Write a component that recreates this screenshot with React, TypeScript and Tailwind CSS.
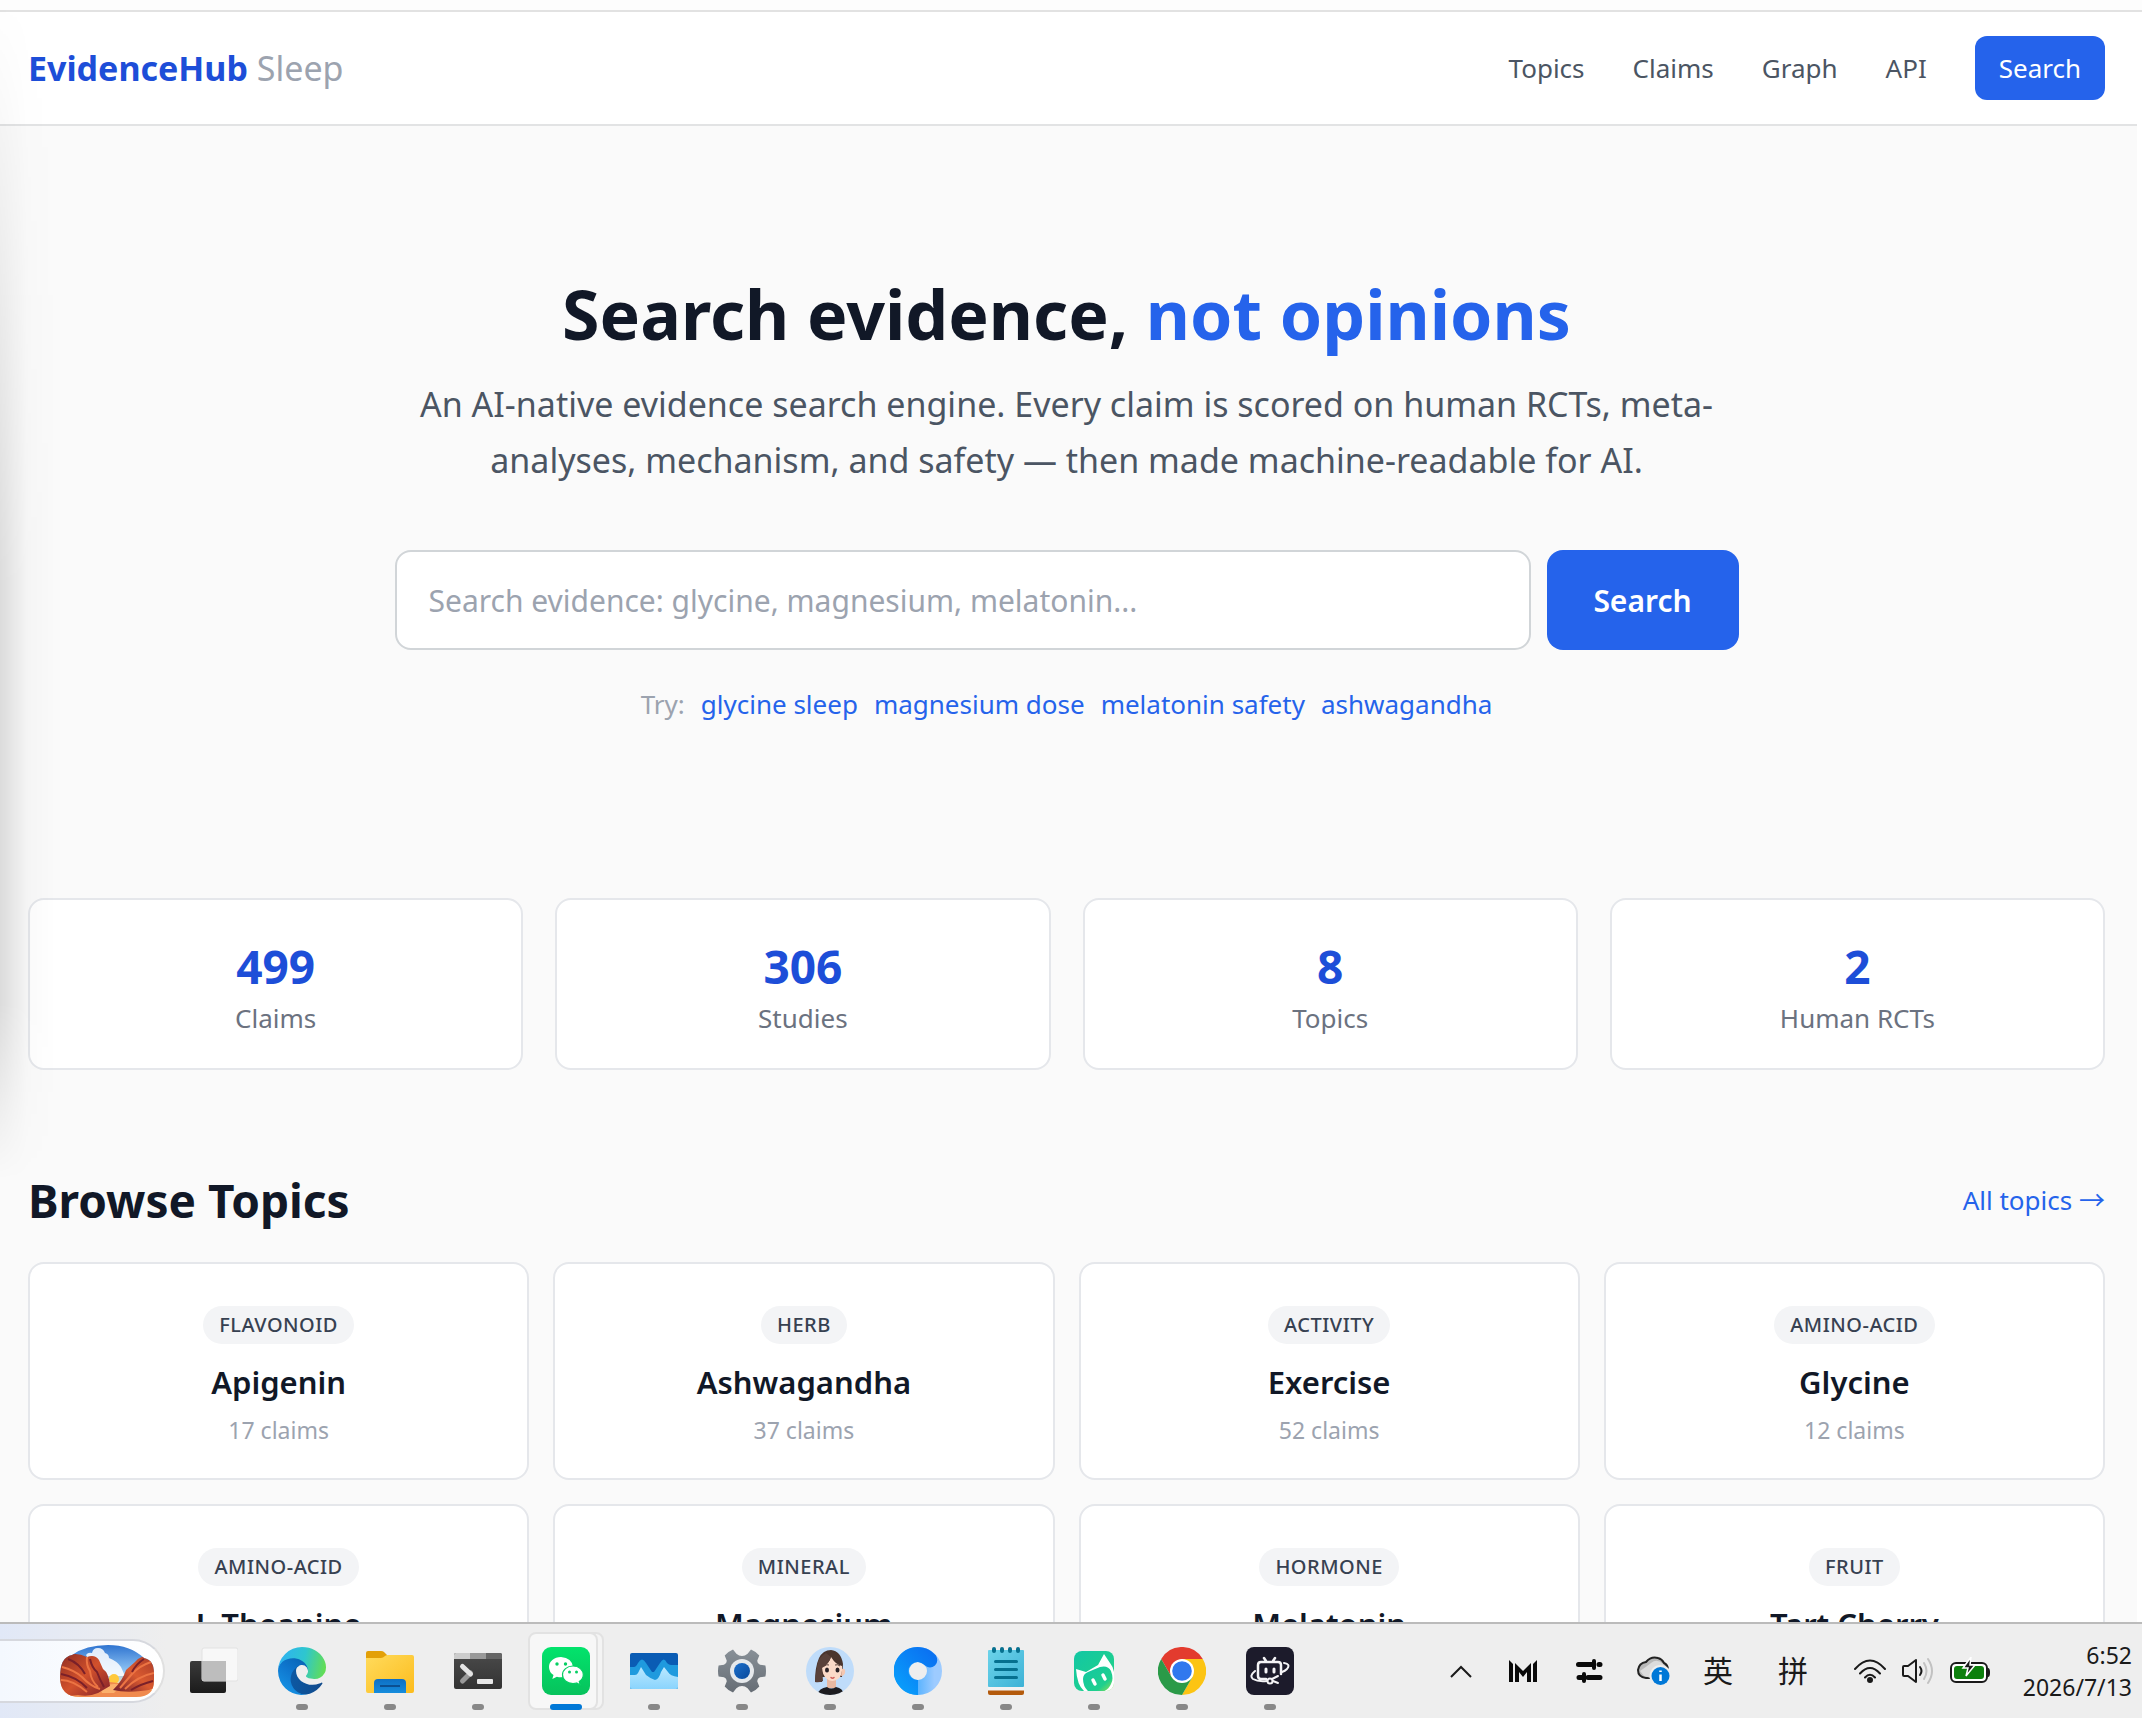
import type { ReactNode } from 'react';

interface Topic {
  category: string;
  name: string;
  claims: number;
}

const navLinks = ['Topics', 'Claims', 'Graph', 'API'];

const suggestions = ['glycine sleep', 'magnesium dose', 'melatonin safety', 'ashwagandha'];

const stats = [
  { value: 499, label: 'Claims' },
  { value: 306, label: 'Studies' },
  { value: 8, label: 'Topics' },
  { value: 2, label: 'Human RCTs' },
];

const topics: Topic[] = [
  { category: 'flavonoid', name: 'Apigenin', claims: 17 },
  { category: 'herb', name: 'Ashwagandha', claims: 37 },
  { category: 'activity', name: 'Exercise', claims: 52 },
  { category: 'amino-acid', name: 'Glycine', claims: 12 },
  { category: 'amino-acid', name: 'L-Theanine', claims: 24 },
  { category: 'mineral', name: 'Magnesium', claims: 86 },
  { category: 'hormone', name: 'Melatonin', claims: 94 },
  { category: 'fruit', name: 'Tart Cherry', claims: 19 },
];

function Navbar() {
  return (
    <header className="flex items-center justify-between border-b-2 border-[#e2e3e4] bg-white py-6 pl-7 pr-8">
      <a href="#" className="text-[34px] leading-[56px] font-bold text-[#1d4ed8]">
        EvidenceHub <span className="font-normal text-[#9ca3af]">Sleep</span>
      </a>
      <nav className="flex items-center gap-12 text-[26px] leading-10 text-[#4b5563]">
        {navLinks.map((link) => (
          <a key={link} href="#">{link}</a>
        ))}
        <a href="#" className="rounded-xl bg-[#2563eb] px-6 py-3 text-white">Search</a>
      </nav>
    </header>
  );
}

function Hero() {
  return (
    <section className="mx-auto flex max-w-[1344px] flex-col pt-[148px] text-center">
      <h1 className="text-[68px] leading-[80px] font-bold text-[#111827]">
        Search evidence, <span className="text-[#2563eb]">not opinions</span>
      </h1>
      <p className="mt-[22px] text-[34px] leading-[56px] text-[#4b5563]">
        An AI-native evidence search engine. Every claim is scored on human RCTs, meta-analyses, mechanism, and safety — then made machine-readable for AI.
      </p>
      <form className="mt-[62px] flex gap-4" onSubmit={(e) => e.preventDefault()}>
        <input
          type="text"
          aria-label="Search evidence"
          placeholder="Search evidence: glycine, magnesium, melatonin..."
          className="h-[100px] min-w-0 flex-1 rounded-2xl border-2 border-[#d1d5d8] bg-white px-8 text-[30px] placeholder:text-[#9ca3af]"
        />
        <button type="submit" className="w-[192px] rounded-2xl bg-[#2563eb] text-[30px] font-semibold text-white">
          Search
        </button>
      </form>
      <div className="mt-[34px] flex justify-center gap-4 text-[26px] leading-10">
        <span className="text-[#9ca3af]">Try:</span>
        {suggestions.map((s) => (
          <a key={s} href="#" className="text-[#2563eb]">{s}</a>
        ))}
      </div>
    </section>
  );
}

function Stats() {
  return (
    <section className="mt-[174px] grid grid-cols-4 gap-8">
      {stats.map((s) => (
        <div key={s.label} className="rounded-2xl border-2 border-[#e5e7eb] bg-white p-8 text-center">
          <div className="text-[46px] leading-[68px] font-bold text-[#1d4ed8]">{s.value}</div>
          <div className="text-[26px] leading-9 text-[#6b7280]">{s.label}</div>
        </div>
      ))}
    </section>
  );
}

function TopicCard({ topic }: { topic: Topic }) {
  return (
    <a href="#" className="flex flex-col items-center rounded-2xl border-2 border-[#e5e7eb] bg-white px-8 pt-[42px] pb-8">
      <span className="rounded-full bg-[#f3f4f6] px-4 py-1 text-[20px] leading-[30px] font-medium tracking-wide text-[#374151] uppercase">
        {topic.category}
      </span>
      <h3 className="mt-[14px] text-[31px] leading-[48px] font-semibold text-[#111827]">{topic.name}</h3>
      <p className="mt-2 text-[23px] leading-8 text-[#9ca3af]">{topic.claims} claims</p>
    </a>
  );
}

function BrowseTopics() {
  return (
    <section className="mt-[98px]">
      <div className="mb-[30px] flex items-center justify-between">
        <h2 className="text-[46px] leading-[64px] font-bold text-[#111827]">Browse Topics</h2>
        <a href="#" className="text-[26px] leading-10 text-[#2563eb]">All topics →</a>
      </div>
      <div className="grid grid-cols-4 gap-6">
        {topics.map((t) => (
          <TopicCard key={t.name} topic={t} />
        ))}
      </div>
    </section>
  );
}

/* Taskbar icons */

function CanyonPicture() {
  return (
    <svg width="94" height="52" viewBox="0 0 94 52">
      <defs>
        <linearGradient id="sky" x1="0" y1="0" x2="0" y2="1">
          <stop offset="0" stopColor="#2f74d0" />
          <stop offset=".5" stopColor="#8fc4f4" />
          <stop offset=".8" stopColor="#fde3b0" />
        </linearGradient>
        <linearGradient id="rockL" x1="0" y1="0" x2="1" y2="1">
          <stop offset="0" stopColor="#8d2c22" />
          <stop offset=".5" stopColor="#d2512c" />
          <stop offset="1" stopColor="#7c1f2b" />
        </linearGradient>
        <linearGradient id="rockR" x1="1" y1="0" x2="0" y2="1">
          <stop offset="0" stopColor="#a93a27" />
          <stop offset=".5" stopColor="#d95a30" />
          <stop offset="1" stopColor="#6f1c2c" />
        </linearGradient>
        <clipPath id="canyon">
          <path d="M0 32Q0 12 12 10 26 0 48 0t36 13q10 2 10 15v8q0 16-18 16H20Q0 52 0 32Z" />
        </clipPath>
      </defs>
      <g clipPath="url(#canyon)">
        <rect width="94" height="52" fill="url(#sky)" />
        <path d="M26 10q2-3 6-2 1-5 6-5 5 0 7 5 4 1 4 5 8 3 12 9l4 9H38Z" fill="#fff" opacity=".85" />
        <circle cx="54" cy="34" r="5" fill="#ffc93c" />
        <path d="M0 52h94v-6l-12-5-32-4-28 6Z" fill="#f08a4e" />
        <path d="M40 42q12-5 22-2l-8 8H42Z" fill="#fbb06c" />
        <path d="M0 8l9 2q8-3 18 2 8-3 12 3l4 9q6 4 7 17l-12 7q-9 4-20 2L0 52Z" fill="url(#rockL)" />
        <path d="M27 12q-1 8 3 14 1 10 8 16M2 22q12 3 20 10 8 9 18 12M1 35q12 0 26 12" fill="none" stroke="#ec7443" strokeWidth="2" />
        <path d="M30 14q2 9 7 13 3 8 7 15M8 14q11 4 17 15M1 29q16 3 26 14" fill="none" stroke="#7a2029" strokeWidth="2" />
        <path d="M94 10q-14 0-19 7l-9 8q-3 10-13 20 16 4 41-1Z" fill="url(#rockR)" />
        <path d="M91 17q-12 4-19 12l-12 14M94 28q-16 3-29 16" fill="none" stroke="#ec7443" strokeWidth="2" />
        <path d="M84 14q-8 5-12 13M93 36q-12 3-22 9" fill="none" stroke="#7a2029" strokeWidth="2" />
      </g>
    </svg>
  );
}

function TaskViewIcon() {
  return (
    <svg width="48" height="48" viewBox="0 0 48 48">
      <defs>
        <linearGradient id="tv" x1="0" y1="0" x2="0" y2="1">
          <stop offset="0" stopColor="#3a3a3a" />
          <stop offset="1" stopColor="#1b1b1b" />
        </linearGradient>
      </defs>
      <rect x="0" y="14" width="36" height="32" rx="2" fill="url(#tv)" />
      <rect x="12" y="1" width="36" height="33" rx="2" fill="#f8f8f8" stroke="#e2e2e2" />
      <path d="M12 14h24v20H14q-2 0-2-2Z" fill="#bdbdbd" />
    </svg>
  );
}

function EdgeIcon() {
  return (
    <svg width="48" height="48" viewBox="0 0 256 256">
      <defs>
        <linearGradient id="e1" x1="60" y1="178" x2="240" y2="178" gradientUnits="userSpaceOnUse">
          <stop offset="0" stopColor="#0c59a4" />
          <stop offset="1" stopColor="#114a8b" />
        </linearGradient>
        <linearGradient id="e2" x1="150" y1="90" x2="40" y2="230" gradientUnits="userSpaceOnUse">
          <stop offset="0" stopColor="#0a66b8" />
          <stop offset=".5" stopColor="#0f78d0" />
          <stop offset="1" stopColor="#1590e2" />
        </linearGradient>
        <linearGradient id="e3" x1="20" y1="60" x2="250" y2="110" gradientUnits="userSpaceOnUse">
          <stop offset="0" stopColor="#2fb4ee" />
          <stop offset=".5" stopColor="#2ec6cf" />
          <stop offset="1" stopColor="#62dd55" />
        </linearGradient>
      </defs>
      <path fill="url(#e1)" d="M231.07 190.54c-3.4 1.8-6.9 3.36-10.53 4.7a101.9 101.9 0 01-35.9 6.46c-47.32 0-88.54-32.55-88.54-74.32A31.48 31.48 0 01112.5 100c-42.8 1.8-53.8 46.4-53.8 72.53 0 73.88 68.1 81.37 82.76 81.37 7.91 0 19.84-2.3 27-4.56l1.31-.44A128.34 128.34 0 00236.4 196.1a4 4 0 00-5.33-5.56z" />
      <path fill="url(#e2)" d="M105.73 241.42A79.2 79.2 0 0183 220.08a80.72 80.72 0 0129.5-120.08c3.12-1.47 8.45-4.05 15.54-4a32.35 32.35 0 0125.69 13 31.88 31.88 0 016.36 18.66c0-.21 24.46-79.6-80-79.6-43.9 0-80 41.66-80 78.21a130.15 130.15 0 0012.11 56 128 128 0 00156.38 67.11 75.55 75.55 0 01-62.78-8z" />
      <path fill="url(#e3)" d="M152.33 148.86c-.81 1.05-3.3 2.5-3.3 5.66 0 2.61 1.7 5.12 4.72 7.23 14.38 10 41.49 8.68 41.56 8.68a59.56 59.56 0 0030.27-8.35A61.38 61.38 0 00256 109.2c.26-22.41-8-37.31-11.34-43.91C223.46 23.84 177.72 0 128 0A128 128 0 000 126.2c.48-36.54 36.8-66.05 80-66.05 3.5 0 23.46.34 42 10.07 16.34 8.58 24.9 18.94 30.85 29.21 6.18 10.67 7.28 24.15 7.28 29.52s-2.74 13.33-7.8 19.91z" />
    </svg>
  );
}

function FolderIcon() {
  return (
    <svg width="48" height="48" viewBox="0 0 48 48">
      <defs>
        <linearGradient id="fd" x1="0" y1="0" x2="1" y2="1">
          <stop offset="0" stopColor="#ffdb5c" />
          <stop offset="1" stopColor="#fcbc1d" />
        </linearGradient>
        <linearGradient id="fb" x1="0" y1="0" x2="0" y2="1">
          <stop offset="0" stopColor="#0d6fc4" />
          <stop offset="1" stopColor="#168ddd" />
        </linearGradient>
      </defs>
      <path d="M0 6q0-2 2-2h13q2 0 3 1l3 3v8H0Z" fill="#e3a008" />
      <path d="M0 11h15q2 0 4-2 1-1 3-1h24q2 0 2 2v34q0 2-2 2H2q-2 0-2-2Z" fill="url(#fd)" />
      <path d="M8 46V36q0-4 4-4h24q4 0 4 4v10Z" fill="url(#fb)" />
      <path d="M14 39h20" stroke="#0b4f91" strokeWidth="2" />
    </svg>
  );
}

function TerminalIcon() {
  return (
    <svg width="48" height="36" viewBox="0 0 48 36">
      <defs>
        <linearGradient id="tm" x1="0" y1="0" x2="0" y2="1">
          <stop offset="0" stopColor="#4a4a4a" />
          <stop offset="1" stopColor="#333" />
        </linearGradient>
      </defs>
      <rect width="48" height="36" rx="2" fill="url(#tm)" />
      <path d="M2 0h14v6H0V2q0-2 2-2Z" fill="#ccc" />
      <path d="M16 0h16v6H16Z" fill="#999" />
      <path d="M32 0h14q2 0 2 2v4H32Z" fill="#666" />
      <path d="m8.500 28 8-8" stroke="#999" strokeWidth="5" strokeLinecap="round" />
      <path d="m8.500 13.500 8 7.500" stroke="#e4e4e4" strokeWidth="5" strokeLinecap="round" />
      <rect x="23" y="26" width="16" height="5" rx="1" fill="#e8e8e8" />
    </svg>
  );
}

function WeChatIcon() {
  return (
    <svg width="48" height="48" viewBox="0 0 48 48">
      <defs>
        <linearGradient id="wc" x1="0" y1="0" x2="0" y2="1">
          <stop offset="0" stopColor="#02e36c" />
          <stop offset="1" stopColor="#07c25c" />
        </linearGradient>
      </defs>
      <rect width="48" height="48" rx="9" fill="url(#wc)" />
      <path d="M19 10C12 10 7 14.500 7 20q0 5 4.500 8l-1.200 4 4.600-2.300q2 .6 4.100.6 12-1 12-10.300Q30 11 19 10Z" fill="#fff" />
      <path d="M31 19c-6 0-10.500 4-10.500 8.800S25 36.500 31 36.500q2 0 3.600-.5l3.700 2-1-3.400q4-2.700 4-6.800C41.300 23 37 19 31 19Z" fill="#fff" stroke="#05cf62" strokeWidth="1.200" />
      <circle cx="15" cy="17" r="1.700" fill="#06cf63" />
      <circle cx="23.500" cy="17" r="1.700" fill="#06cf63" />
      <circle cx="27.500" cy="25" r="1.500" fill="#06cf63" />
      <circle cx="34.500" cy="25" r="1.500" fill="#06cf63" />
    </svg>
  );
}

function MonitorIcon() {
  return (
    <svg width="48" height="36" viewBox="0 0 48 36">
      <defs>
        <linearGradient id="mn" x1="0" y1="0" x2="0" y2="1">
          <stop offset="0" stopColor="#b9e8ff" />
          <stop offset="1" stopColor="#8ad4fd" />
        </linearGradient>
        <clipPath id="mc"><rect width="48" height="36" rx="2" /></clipPath>
      </defs>
      <g clipPath="url(#mc)">
        <rect width="48" height="36" fill="#0a5cb4" />
        <path d="M0 14h4q2 0 4-4 4-7 8 0l6 9h2l6-9q4-7 7 0 2 2 4 2h7v24H0Z" fill="#1f9ade" />
        <path d="M0 22h5q2 0 3-2l3-6 5 8q5 4 9 5 4-1 6-8l3-5 4 5q2 4 10 5v12H0Z" fill="url(#mn)" />
      </g>
    </svg>
  );
}

function SettingsIcon() {
  return (
    <svg width="48" height="48" viewBox="0 0 48 48">
      <defs>
        <linearGradient id="st" x1="0" y1="0" x2="0" y2="48" gradientUnits="userSpaceOnUse">
          <stop offset="0" stopColor="#8a9299" />
          <stop offset="1" stopColor="#646b73" />
        </linearGradient>
        <linearGradient id="sb" x1="0" y1="0" x2="1" y2="1">
          <stop offset="0" stopColor="#1c6fcb" />
          <stop offset="1" stopColor="#0a4a9c" />
        </linearGradient>
      </defs>
      <path
        d="M48 24q0 3-.6 5.600l-5.400.7q-3 1-2.700 4.300l2 4.900q-3.400 4-8.300 6l-3.400-4.200q-2.600-2.400-5.600-2.400t-5.600 2.400L15 45.500q-4.900-2-8.300-6l2-4.900q.3-3.300-2.700-4.300l-5.400-.7Q0 27 0 24t.6-5.600l5.400-.7q3-1 2.700-4.300l-2-4.900q3.400-4 8.300-6l3.400 4.200Q21 9.100 24 9.100t5.600-2.400L33 2.500q4.900 2 8.300 6l-2 4.900q-.3 3.300 2.700 4.300l5.400.7Q48 21 48 24Z"
        fill="url(#st)"
      />
      <circle cx="24" cy="24" r="12" fill="#e6e9ec" />
      <circle cx="24" cy="24" r="8" fill="url(#sb)" />
    </svg>
  );
}

function AvatarIcon() {
  return (
    <svg width="48" height="48" viewBox="0 0 48 48">
      <defs>
        <clipPath id="av"><circle cx="24" cy="24" r="24" /></clipPath>
      </defs>
      <g clipPath="url(#av)">
        <rect width="48" height="48" fill="#bfdcfa" />
        <path d="M9 35Q9 20 13 11 17 3 25 3q10 1 12 14l-1 13H16v5Z" fill="#4a352d" />
        <path d="M21 30h9v11h-9Z" fill="#e9b9a2" />
        <path d="M11 48q2-7 10-8 4 3 9 0 7 1 8 8Z" fill="#1d1c1f" />
        <path d="M16 20q7-3 9-10 5 8 11 9 1 9-4 13-6 4-11 0-5-4-5-12Z" fill="#fbdac8" />
        <path d="M36 22q4-1 3 4-1 3-4 3Z" fill="#f4c6b0" />
        <path d="M9 35q4 1 8-1l-1-13q7-4 9-11l-5-4q-8 4-9 14Z" fill="#59413a" />
        <ellipse cx="21" cy="23" rx="2" ry="2.500" fill="#2a2226" />
        <ellipse cx="31.500" cy="23" rx="2" ry="2.500" fill="#2a2226" />
        <path d="M18 19q3-2 5-1M29 18q3-1 5 1" stroke="#59413a" fill="none" />
        <path d="M25 30.500q1.500 1.500 3 0" stroke="#d0605c" strokeWidth="1.500" fill="none" strokeLinecap="round" />
      </g>
    </svg>
  );
}

function RingIcon() {
  return (
    <svg width="48" height="48" viewBox="0 0 48 48">
      <defs>
        <linearGradient id="rg" x1="0" y1="0" x2="1" y2="0">
          <stop offset="0" stopColor="#0fa0fb" />
          <stop offset=".5" stopColor="#5cb4ff" />
          <stop offset="1" stopColor="#9dcbff" />
        </linearGradient>
        <linearGradient id="rh" x1="1" y1="0" x2="0" y2="1">
          <stop offset="0" stopColor="#0a6bf0" />
          <stop offset=".5" stopColor="#0a86f6" />
          <stop offset="1" stopColor="#08a6fd" />
        </linearGradient>
      </defs>
      <circle cx="24" cy="24" r="16.500" fill="none" stroke="url(#rg)" strokeWidth="15" />
      <path d="M24 48A24 24 0 1 1 42 8.500q3 6-1 10-5 4-10 0l-2-1.500A9 9 0 1 0 24 33Z" fill="url(#rh)" />
    </svg>
  );
}

function NotepadIcon() {
  return (
    <svg width="36" height="48" viewBox="0 0 36 48">
      <defs>
        <linearGradient id="np" x1="0" y1="0" x2="1" y2="1">
          <stop offset="0" stopColor="#6cd3ea" />
          <stop offset="1" stopColor="#3db2d6" />
        </linearGradient>
      </defs>
      <path d="M0 40h36v4H0Z" fill="#f2f2f2" />
      <path d="M0 43.500h36V46q0 2-2 2H2q-2 0-2-2Z" fill="#b35a0c" />
      <rect y="3" width="36" height="37" rx="1" fill="url(#np)" />
      <path d="M7.500 14.500h21M7.500 22.500h21M7.500 30.500h21" stroke="#06708f" strokeWidth="3" strokeLinecap="round" />
      <path d="M6 2v2M14 2v2M22 2v2M30 2v2" stroke="#06708f" strokeWidth="4" strokeLinecap="round" />
    </svg>
  );
}

function CatBotIcon() {
  return (
    <svg width="40" height="40" viewBox="0 0 40 40">
      <defs>
        <linearGradient id="cb" x1="0" y1="0" x2="1" y2="1">
          <stop offset="0" stopColor="#12c7a4" />
          <stop offset=".7" stopColor="#1fcf8e" />
          <stop offset="1" stopColor="#9be04f" />
        </linearGradient>
        <clipPath id="cc"><rect width="40" height="40" rx="8" /></clipPath>
      </defs>
      <g clipPath="url(#cc)">
        <rect width="40" height="40" fill="url(#cb)" />
        <path d="M2 18l10 3 12-7 6-11 6 9q5 6 4 14v14H10Q3 34 2 18Z" fill="#fff" />
        <path d="M9 28q0-5 5-7l12-5q8-2 11 4 3 8 0 13-3 7-10 8H15q-6-5-6-13Z" fill="url(#cb)" />
        <path d="m19 29 2 4M29 24l2 4" stroke="#fff" strokeWidth="3.500" strokeLinecap="round" />
      </g>
    </svg>
  );
}

function ChromeIcon() {
  return (
    <svg width="48" height="48" viewBox="0 0 48 48">
      <path d="M44.800 12H24L13.600 30 3.200 12a24 24 0 0 1 41.600 0Z" fill="#e33b2e" />
      <path d="M44.800 12A24 24 0 0 1 24 48l10.400-18L24 12Z" fill="#fcc413" />
      <path d="M24 48A24 24 0 0 1 3.200 12l10.400 18h20.800Z" fill="#2a9a48" />
      <circle cx="24" cy="24" r="12" fill="#fff" />
      <circle cx="24" cy="24" r="9.800" fill="#3078ee" />
    </svg>
  );
}

function BotIcon() {
  return (
    <svg width="48" height="48" viewBox="0 0 48 48" fill="none" stroke="#f4f4f6" strokeWidth="2.500" strokeLinecap="round">
      <rect width="48" height="48" rx="8" fill="#1c1b2b" stroke="none" />
      <path d="M20 32h-5q-3 0-3-3V18q0-3 3-3h17q3 0 3 3v9M20 14l-2-3M27 14l2-3" />
      <path d="M20 22v3M28 22v3" strokeWidth="3" />
      <path d="M38 16q7 1 3 6-2 2-5 3M9 24q-6 5-2 8 5 3 14 2" strokeWidth="2" />
      <circle cx="24" cy="34" r="2.500" strokeWidth="2" />
      <path d="m26 32 6-3M27 34l5 2" strokeWidth="2" />
    </svg>
  );
}

const apps: { name: string; icon: ReactNode; state: 'closed' | 'running' | 'active' }[] = [
  { name: 'Task View', icon: <TaskViewIcon />, state: 'closed' },
  { name: 'Edge', icon: <EdgeIcon />, state: 'running' },
  { name: 'File Explorer', icon: <FolderIcon />, state: 'running' },
  { name: 'Terminal', icon: <TerminalIcon />, state: 'running' },
  { name: 'WeChat', icon: <WeChatIcon />, state: 'active' },
  { name: 'Task Manager', icon: <MonitorIcon />, state: 'running' },
  { name: 'Settings', icon: <SettingsIcon />, state: 'running' },
  { name: 'Assistant', icon: <AvatarIcon />, state: 'running' },
  { name: 'Quark', icon: <RingIcon />, state: 'running' },
  { name: 'Notepad', icon: <NotepadIcon />, state: 'running' },
  { name: 'Cat Bot', icon: <CatBotIcon />, state: 'running' },
  { name: 'Chrome', icon: <ChromeIcon />, state: 'running' },
  { name: 'Bot', icon: <BotIcon />, state: 'running' },
];

function Tray() {
  return (
    <div className="flex items-center text-[#1a1a1a]">
      <button aria-label="Show hidden icons" className="flex w-[62px] justify-center">
        <svg width="22" height="13" viewBox="0 0 22 13" fill="none" stroke="currentColor" strokeWidth="2">
          <path d="m1 12 10-10 10 10" />
        </svg>
      </button>
      <button aria-label="Monitor tray" className="flex w-[62px] justify-center">
        <svg width="28" height="22" viewBox="0 0 28 22" fill="#0a0a0a">
          <path d="M0 0l4 4v18H0ZM28 0l-4 4v18h4ZM6 3l8 8 8-8v19h-4V12l-4 5-4-5v10H6Z" />
        </svg>
      </button>
      <button aria-label="Audio mixer" className="flex w-[70px] justify-center">
        <svg width="27" height="24" viewBox="0 0 27 24" fill="none" stroke="#0a0a0a" strokeWidth="5">
          <path d="M2.500 5.500H17M12 18.500h12" strokeLinecap="round" />
          <path d="M23 5.500h1M3 18.500h3" strokeLinecap="round" />
          <path d="M18 2v7M8 15v7" strokeWidth="4" strokeLinecap="round" />
        </svg>
      </button>
      <button aria-label="Cloud sync" className="flex w-[60px] justify-center">
        <svg width="34" height="30" viewBox="0 0 34 30">
          <path d="M9 22q-8-1-8-8 1-7 8-8 5-6 12-4 4 1 6 5 4 2 4 7l-1 8Z" fill="#b9b9b9" stroke="#222" strokeWidth="2" />
          <path d="M3 15q6-4 11-8 6-5 12 1l4 5-8 4-8 5-7-2Z" fill="#dcdcdc" />
          <circle cx="23.500" cy="20" r="11" fill="#eee" />
          <circle cx="23.500" cy="20" r="9" fill="#0078d7" />
          <path d="M23.500 18.500v6.500M23.500 14.500v1.500" stroke="#fff" strokeWidth="2.500" />
        </svg>
      </button>
      <button className="w-[68px] text-center text-[30px] leading-10">英</button>
      <button className="w-[82px] text-center text-[30px] leading-10">拼</button>
      <button aria-label="Network, volume and battery" className="flex items-center gap-4 pl-5">
        <svg width="32" height="24" viewBox="0 0 32 24" fill="none" stroke="currentColor" strokeWidth="2" strokeLinecap="round">
          <path d="M1 10q15-17 30 0M6 14.500q10-11 20 0M11 18.500q5-5.500 10 0" />
          <circle cx="16" cy="21" r="2" fill="currentColor" />
        </svg>
        <svg width="32" height="28" viewBox="0 0 32 28" fill="none" stroke="currentColor" strokeWidth="2" strokeLinecap="round" strokeLinejoin="round">
          <path d="M1 10v8q0 1 1 1h4l8 6V3L6 9H2q-1 0-1 1ZM18 10q3 4 0 8" />
          <path d="M22 6q5 8 0 16M26 2q8 12 0 24" stroke="#c2c2c2" />
        </svg>
        <svg width="40" height="28" viewBox="0 0 40 28">
          <rect x="1" y="6" width="36" height="19" rx="5" fill="#fff" stroke="#1a1a1a" strokeWidth="2" />
          <rect x="4" y="9" width="30" height="13" rx="3" fill="#0d800d" />
          <path d="M38 11q2 0 2 4.500T38 20Z" fill="#1a1a1a" />
          <path d="m21 0-8 11h5l-2 8 9-11h-5Z" fill="#1a1a1a" stroke="#fff" strokeWidth="1.500" />
        </svg>
      </button>
      <button className="w-[152px] pr-[10px] pl-4 text-right text-[23px] leading-8">
        6:52
        <br />
        2026/7/13
      </button>
    </div>
  );
}

function Taskbar() {
  return (
    <footer className="relative z-20 flex h-24 shrink-0 items-stretch justify-between border-t-2 border-[#bbbbbb] bg-[#eeeeee]">
      <div className="flex items-center">
        <div className="mr-[5px] flex h-full w-[165px] items-center bg-linear-to-r from-[#e1e8f7] to-[#eeeeee]">
          <button
            aria-label="Search highlights"
            className="flex h-16 w-full items-center justify-end rounded-r-full border-y-2 border-r-2 border-y-[#d6d8de] border-r-[#e0e0e0] bg-linear-to-r from-[#f4f8fe] to-white pr-[9px]"
          >
            <CanyonPicture />
          </button>
        </div>
        {apps.map((app) => (
          <button key={app.name} aria-label={app.name} className="relative flex h-full w-[88px] items-center justify-center">
            {app.state === 'active' && (
              <>
                <span className="absolute inset-y-2 left-3 w-[70px] rounded-lg border-2 border-[#e2e2e2] bg-[#f4f4f4]" />
                <span className="absolute inset-y-2 left-[6px] w-[70px] rounded-lg border-2 border-[#e2e2e2] bg-[#f7f7f7]" />
                <span className="absolute bottom-2 h-[6px] w-8 rounded-full bg-[#0078d7]" />
              </>
            )}
            {app.state === 'running' && <span className="absolute bottom-2 h-[6px] w-3 rounded-full bg-[#888888]" />}
            <span className="relative">{app.icon}</span>
          </button>
        ))}
      </div>
      <Tray />
    </footer>
  );
}

export default function App() {
  return (
    <div className="flex h-screen flex-col overflow-hidden bg-white font-['Noto_Sans','Noto_Sans_CJK_SC',sans-serif]">
      <div className="relative min-h-0 flex-1 overflow-hidden">
        <div className="h-3 border-b-2 border-[#e2e2e2] bg-[#fdfdfd]" />
        <div className="mr-[5px] bg-[#fafafa]">
          <Navbar />
          <main className="pr-8 pb-16 pl-7">
            <Hero />
            <Stats />
            <BrowseTopics />
          </main>
        </div>
        {/* shadow cast by the window on the left */}
        <div className="pointer-events-none absolute top-0 left-0 h-[1180px] w-14 bg-linear-to-r from-black/12 via-black/2 to-transparent mask-b-from-85% mask-t-from-50%" />
      </div>
      <Taskbar />
    </div>
  );
}
